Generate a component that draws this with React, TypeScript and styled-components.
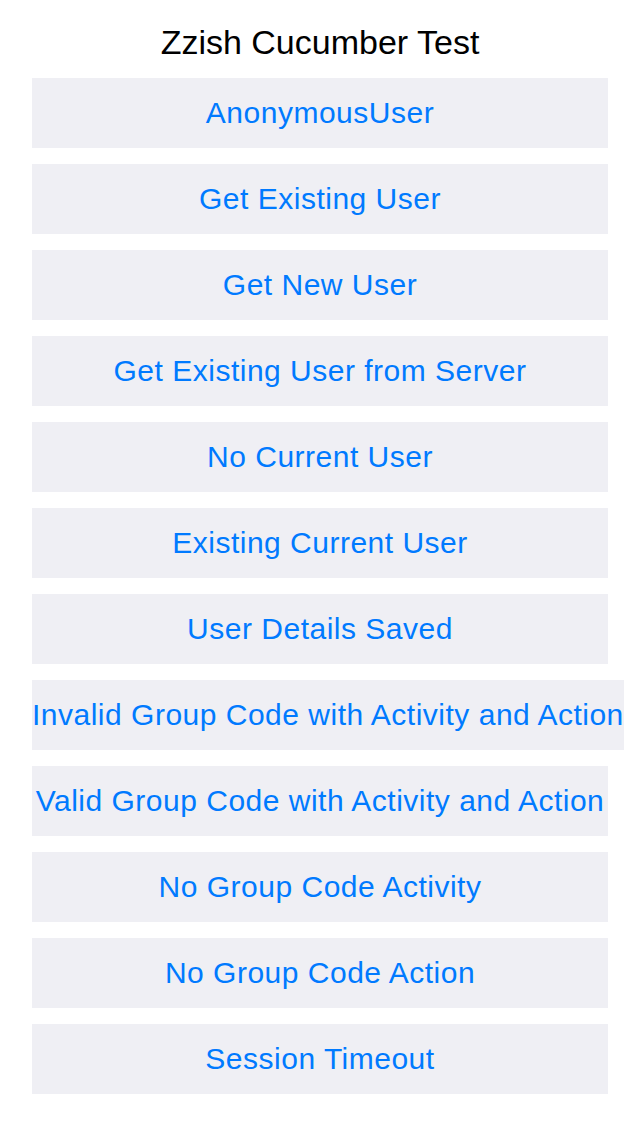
import React from 'react';
import styled, { createGlobalStyle } from 'styled-components';

const GlobalStyle = createGlobalStyle`
  body {
    margin: 0;
    background: #ffffff;
    font-family: "Liberation Sans", Arial, Helvetica, sans-serif;
  }
`;

const Screen = styled.div`
  width: 640px;
  min-height: 1136px;
  display: flex;
  flex-direction: column;
  overflow: hidden;
`;

const Title = styled.h1`
  margin: 0;
  height: 78px;
  display: flex;
  align-items: center;
  justify-content: center;
  padding-top: 6px;
  box-sizing: border-box;
  font-size: 34px;
  font-weight: 400;
  color: #000000;
`;

const List = styled.div`
  display: flex;
  flex-direction: column;
  align-items: flex-start;
  gap: 16px;
  padding-left: 32px;
`;

const TestButton = styled.button`
  height: 70px;
  min-width: 576px;
  width: max-content;
  padding: 0;
  border: none;
  background: #efeff4;
  color: #007aff;
  font-family: "Liberation Sans", Arial, Helvetica, sans-serif;
  font-size: 30px;
  letter-spacing: 0.5px;
  white-space: nowrap;
  text-align: center;
  cursor: pointer;
`;

const tests = [
  'AnonymousUser',
  'Get Existing User',
  'Get New User',
  'Get Existing User from Server',
  'No Current User',
  'Existing Current User',
  'User Details Saved',
  'Invalid Group Code with Activity and Action',
  'Valid Group Code with Activity and Action',
  'No Group Code Activity',
  'No Group Code Action',
  'Session Timeout',
];

const App: React.FC = () => {
  return (
    <Screen>
      <GlobalStyle />
      <Title>Zzish Cucumber Test</Title>
      <List>
        {tests.map((t) => (
          <TestButton key={t}>{t}</TestButton>
        ))}
      </List>
    </Screen>
  );
};

export default App;
